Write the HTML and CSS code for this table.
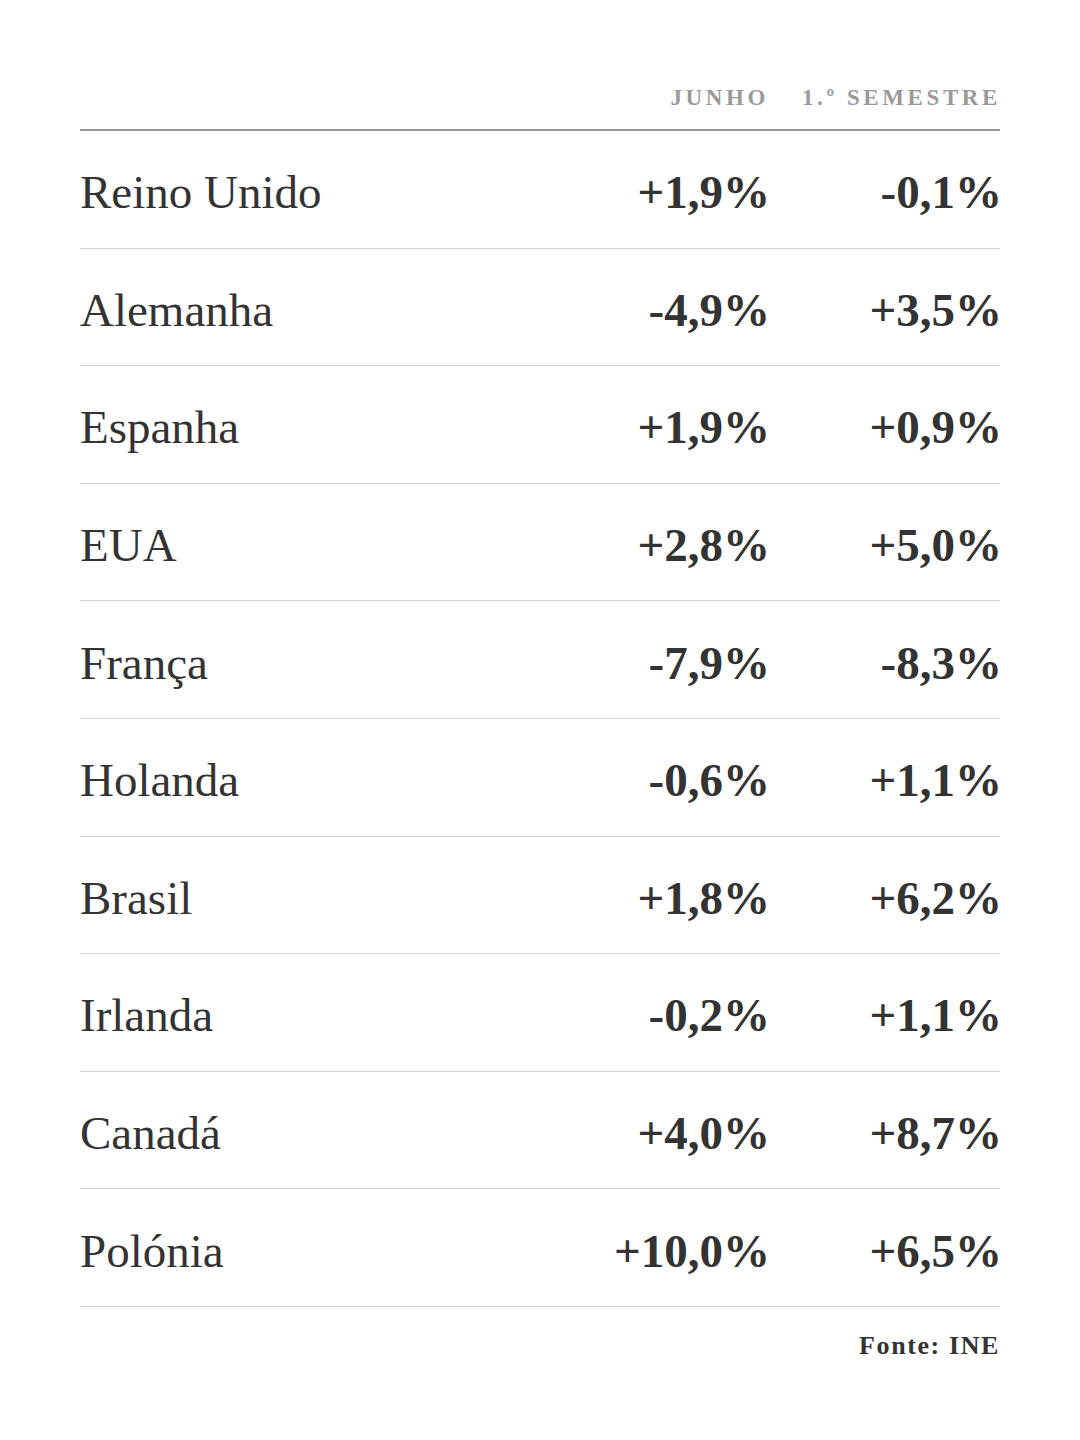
FILE: index.html
```html
<!DOCTYPE html>
<html lang="pt">
<head>
<meta charset="utf-8">
<link rel="stylesheet" href="styles.css">
</head>
<body>
<div class="page">
  <div class="table">
    <div class="head">
      <div></div>
      <div class="hcell">JUNHO</div>
      <div class="hcell">1.º SEMESTRE</div>
    </div>
    <div class="row"><div class="name">Reino Unido</div><div class="val">+1,9%</div><div class="val">-0,1%</div></div>
    <div class="row"><div class="name">Alemanha</div><div class="val">-4,9%</div><div class="val">+3,5%</div></div>
    <div class="row"><div class="name">Espanha</div><div class="val">+1,9%</div><div class="val">+0,9%</div></div>
    <div class="row"><div class="name">EUA</div><div class="val">+2,8%</div><div class="val">+5,0%</div></div>
    <div class="row"><div class="name">França</div><div class="val">-7,9%</div><div class="val">-8,3%</div></div>
    <div class="row"><div class="name">Holanda</div><div class="val">-0,6%</div><div class="val">+1,1%</div></div>
    <div class="row"><div class="name">Brasil</div><div class="val">+1,8%</div><div class="val">+6,2%</div></div>
    <div class="row"><div class="name">Irlanda</div><div class="val">-0,2%</div><div class="val">+1,1%</div></div>
    <div class="row"><div class="name">Canadá</div><div class="val">+4,0%</div><div class="val">+8,7%</div></div>
    <div class="row"><div class="name">Polónia</div><div class="val">+10,0%</div><div class="val">+6,5%</div></div>
    <div class="source">Fonte: INE</div>
  </div>
</div>
</body>
</html>
```
FILE: styles.css
```css
html, body {
  margin: 0;
  padding: 0;
  background: #ffffff;
}
body {
  font-family: "Liberation Serif", "DejaVu Serif", serif;
  color: #333333;
}
.page {
  padding: 0 80px;
}
.table {
  display: flex;
  flex-direction: column;
}
.head {
  display: grid;
  grid-template-columns: 1fr 260px 232px;
  align-items: end;
  height: 131px;
  box-sizing: border-box;
  padding-bottom: 20px;
  border-bottom: 2px solid #999999;
}
.hcell {
  text-align: right;
  font-size: 23px;
  font-weight: bold;
  letter-spacing: 3.6px;
  margin-right: -1px;
  color: #9a9a9a;
  line-height: 1;
}
.row {
  display: grid;
  grid-template-columns: 1fr 260px 232px;
  align-items: center;
  height: 117.6px;
  box-sizing: border-box;
  padding-top: 6px;
  border-bottom: 1.5px solid #d2d2d2;
}
.name {
  font-size: 47px;
  font-weight: normal;
}
.val {
  text-align: right;
  font-size: 47px;
  font-weight: bold;
  margin-right: -2px;
}
.source {
  text-align: right;
  font-size: 26px;
  font-weight: bold;
  letter-spacing: 1.6px;
  margin-right: 0;
  padding-top: 24px;
}
```
